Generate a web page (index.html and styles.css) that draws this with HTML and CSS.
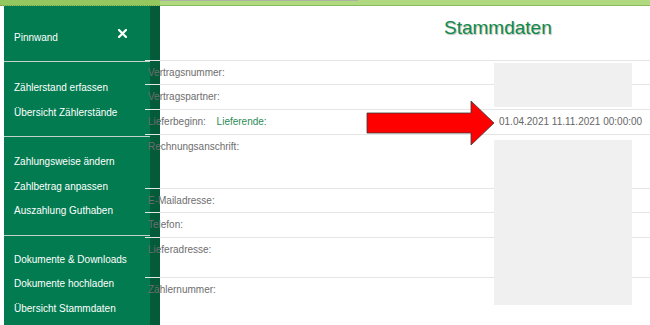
FILE: index.html
```html
<!DOCTYPE html>
<html lang="de">
<head>
    <meta charset="UTF-8">
    <title>Stammdaten</title>
    <link rel="stylesheet" href="styles.css">
</head>
<body>
<div class="topbar">
    <div class="topbar-side"></div>
    <div class="topbar-main"><span class="topbar-tab"></span></div>
</div>
<div class="page">
    <nav class="sidebar">
        <div class="side-head">
            <span>Pinnwand</span>
            <svg class="close" width="9" height="9" viewBox="0 0 9 9">
                <path d="M1 1 L8 8 M8 1 L1 8" stroke="#fff" stroke-width="2.2" stroke-linecap="square"/>
            </svg>
        </div>
        <ul class="side-group g1">
            <li>Zählerstand erfassen</li>
            <li>Übersicht Zählerstände</li>
        </ul>
        <ul class="side-group g2">
            <li>Zahlungsweise ändern</li>
            <li>Zahlbetrag anpassen</li>
            <li>Auszahlung Guthaben</li>
        </ul>
        <ul class="side-group g3">
            <li>Dokumente &amp; Downloads</li>
            <li>Dokumente hochladen</li>
            <li>Übersicht Stammdaten</li>
        </ul>
    </nav>
    <main class="content">
        <h1 class="title">Stammdaten</h1>
        <div class="rows">
            <div class="row short"><span class="label">Vertragsnummer:</span></div>
            <div class="row"><span class="label">Vertragspartner:</span></div>
            <div class="row">
                <span class="label">Lieferbeginn: <span class="label-green">Lieferende:</span></span>
                <span class="value">01.04.2021 11.11.2021 00:00:00</span>
            </div>
            <div class="row addr"><span class="label">Rechnungsanschrift:</span></div>
            <div class="row short"><span class="label">E-Mailadresse:</span></div>
            <div class="row"><span class="label">Telefon:</span></div>
            <div class="row mid"><span class="label">Lieferadresse:</span></div>
            <div class="row last"><span class="label">Zählernummer:</span></div>
        </div>
        <!-- geschwärzte Felder -->
        <div class="redact r1"></div>
        <div class="redact r2"></div>
        <svg class="arrow" width="130" height="46" viewBox="0 0 130 46">
            <polygon points="1,13 105,13 105,1 128,23 105,45 105,33 1,33" fill="#ff0000" stroke="#3a3a3a" stroke-width="0.8"/>
        </svg>
    </main>
</div>
</body>
</html>
```

FILE: styles.css
```css
*{
    margin: 0;
    padding: 0;
    box-sizing: border-box;
}
body{
    width: 650px;
    height: 325px;
    overflow: hidden;
    background: #fff;
    font-family: "Liberation Sans", Arial, sans-serif;
    font-size: 10px;
}
ul{
    list-style: none;
}
/*obere Leiste*/
.topbar{
    display: flex;
    height: 6px;
}
.topbar-side{
    width: 160px;
    background: #95c760;
    border-bottom: 1px dotted #6fa548;
}
.topbar-main{
    flex: 1;
    background: #b1d97f;
    border-bottom: 1px solid #86bb5e;
}
.topbar-tab{
    display: block;
    width: 198px;
    height: 1px;
    background: #a9b3a0;
}
.page{
    display: flex;
    height: 319px;
}
/*Seitenmenue*/
.sidebar{
    width: 156px;
    margin-left: 4px;
    flex-shrink: 0;
    background: #017b4f;
    border-right: 10px solid #035b3a;
    color: #fff;
}
.side-head{
    display: flex;
    align-items: center;
    height: 56px;
    padding: 7px 0 0 10px;
    border-bottom: 1px solid #c3d3ca;
}
.close{
    margin-left: auto;
    margin-right: 23px;
    margin-bottom: 8px;
}
.side-group{
    padding-left: 10px;
    border-bottom: 1px solid #c3d3ca;
}
.side-group li{
    line-height: 24.5px;
}
.g1{
    padding-top: 14px;
    padding-bottom: 11px;
}
.g2{
    padding-top: 13px;
    padding-bottom: 11px;
}
.g3{
    padding-top: 12px;
    border-bottom: none;
}
/*Inhalt*/
.content{
    flex: 1;
    margin-left: -15px;
    position: relative;
    z-index: 1;
}
.title{
    height: 54px;
    padding: 11px 0 0 299px;
    font-size: 19px;
    line-height: 22px;
    font-weight: normal;
    color: #128a4c;
    text-shadow: 1px 1px 1px #b9b9b9;
}
.row{
    display: grid;
    grid-template-columns: 351px 1fr;
    height: 25px;
    padding: 6px 0 0 3px;
    border-top: 1px solid #e5e5e5;
    line-height: 12px;
    color: #6e6e6e;
}
.row.short{
    height: 24px;
}
.row.addr{
    height: 54px;
}
.row.mid{
    height: 40px;
}
.row.last{
    height: 48px;
}
.label-green{
    margin-left: 8px;
    color: #2f8a58;
}
.value{
    color: #666;
}
/*Schwaerzung*/
.redact{
    position: absolute;
    left: 349px;
    width: 138px;
    background: #f0f0f0;
}
.r1{
    top: 57px;
    height: 44px;
}
.r2{
    top: 134px;
    height: 165px;
}
.arrow{
    position: absolute;
    left: 221px;
    top: 94px;
}
```
